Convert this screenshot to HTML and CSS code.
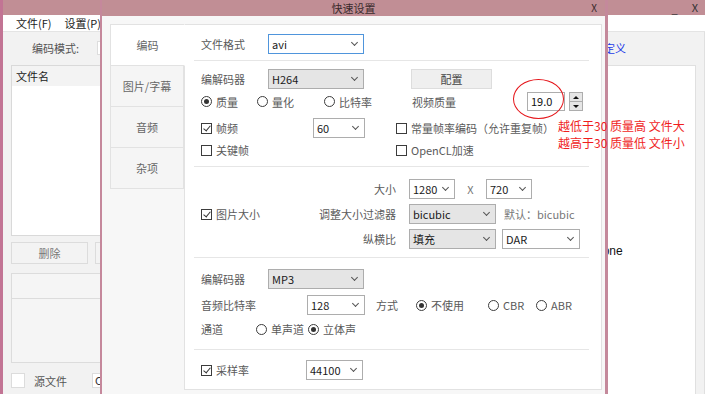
FILE: index.html
```html
<!DOCTYPE html>
<html lang="zh-CN">

<head>
  <meta charset="utf-8">
  <title>快速设置</title>
  <link rel="stylesheet" href="styles.css">
</head>

<body>
  <!-- main window behind the dialog -->
  <div class="app">
    <div class="app-title">
      <span class="win-btn min">_</span>
      <span class="win-btn">X</span>
    </div>
    <div class="app-menu">
      <span>文件(F)</span>
      <span>设置(P)</span>
    </div>
    <div class="app-body">
      <div class="left-pane">
        <div class="mode-row">
          <span class="mode-label">编码模式:</span>
          <span class="mode-box"></span>
        </div>
        <div class="file-list">
          <div class="list-head">文件名</div>
        </div>
        <div class="btn-row">
          <span class="flat-btn">删除</span>
          <span class="flat-btn wide"></span>
        </div>
        <div class="log-box">
          <div class="log-head"></div>
        </div>
        <div class="src-row">
          <span class="big-check"></span>
          <span class="src-label">源文件</span>
          <span class="src-box">C</span>
        </div>
      </div>
      <div class="right-pane">
        <div class="custom-link">自定义</div>
        <div class="side-panel">
          <div class="side-note">None</div>
        </div>
      </div>
    </div>
  </div>

  <!-- quick settings dialog -->
  <div class="dialog">
    <div class="dlg-title">
      <span class="dlg-caption">快速设置</span>
      <span class="dlg-close">X</span>
    </div>
    <div class="dlg-body">
      <div class="tabs">
        <div class="tab active">编码</div>
        <div class="tab">图片/字幕</div>
        <div class="tab">音频</div>
        <div class="tab">杂项</div>
      </div>

      <div class="panel">
        <div class="sec sec-fmt">
          <div class="row">
            <span class="lbl w67">文件格式</span>
            <span class="sel focus w96">avi</span>
          </div>
        </div>

        <div class="sec sec-video">
          <div class="row">
            <span class="lbl w67">编解码器</span>
            <span class="sel gray w96">H264</span>
            <span class="btn">配置</span>
          </div>
          <div class="row row-quality">
            <span class="opt w56"><i class="rb on"></i>质量</span>
            <span class="opt w67"><i class="rb"></i>量化</span>
            <span class="opt w88"><i class="rb"></i>比特率</span>
            <span class="lbl w115">视频质量</span>
            <span class="spin">
              <span class="spin-input">19.0</span>
              <span class="mark"></span>
            </span>
            <span class="spin-btns">
              <span class="up"></span>
              <span class="down"></span>
            </span>
          </div>
          <div class="row row-fps">
            <span class="opt w112"><i class="cb on"></i>帧频</span>
            <span class="sel w52">60</span>
            <span class="opt gap31"><i class="cb"></i>常量帧率编码（允许重复帧）</span>
          </div>
          <div class="row row-key">
            <span class="opt w195"><i class="cb"></i>关键帧</span>
            <span class="opt"><i class="cb"></i>OpenCL加速</span>
          </div>
        </div>

        <div class="sec sec-size">
          <div class="size-check">
            <span class="opt"><i class="cb on"></i>图片大小</span>
          </div>
          <div class="size-grid">
            <span class="glbl">大小</span>
            <span class="gctl">
              <span class="sel w46">1280</span>
              <span class="times">X</span>
              <span class="sel w46">720</span>
            </span>
            <span class="glbl">调整大小过滤器</span>
            <span class="gctl">
              <span class="sel gray w87">bicubic</span>
              <span class="hint">默认：bicubic</span>
            </span>
            <span class="glbl">纵横比</span>
            <span class="gctl">
              <span class="sel gray w87">填充</span>
              <span class="sel w78 ml6">DAR</span>
            </span>
          </div>
        </div>

        <div class="sec sec-audio">
          <div class="row">
            <span class="lbl w67">编解码器</span>
            <span class="sel gray w96">MP3</span>
          </div>
          <div class="row row-bitrate">
            <span class="lbl w106">音频比特率</span>
            <span class="sel w58">128</span>
            <span class="lbl w51 pl11">方式</span>
            <span class="opt w72"><i class="rb on"></i>不使用</span>
            <span class="opt w48"><i class="rb"></i>CBR</span>
            <span class="opt"><i class="rb"></i>ABR</span>
          </div>
          <div class="row row-channel">
            <span class="lbl w55">通道</span>
            <span class="opt w52"><i class="rb"></i>单声道</span>
            <span class="opt"><i class="rb on"></i>立体声</span>
          </div>
        </div>

        <div class="sec sec-rate">
          <div class="row">
            <span class="opt w105"><i class="cb on"></i>采样率</span>
            <span class="sel w57">44100</span>
          </div>
        </div>
      </div>
    </div>
  </div>

  <!-- red annotation drawn over the screenshot -->
  <div class="note">
    <div>越低于30 质量高 文件大</div>
    <div>越高于30 质量低 文件小</div>
  </div>
</body>

</html>
```

FILE: styles.css
```css
* {
  margin: 0;
  padding: 0;
  box-sizing: border-box;
}

body {
  width: 705px;
  height: 394px;
  overflow: hidden;
  position: relative;
  font-family: "Noto Sans CJK SC", "Noto Sans", sans-serif;
  font-size: 11px;
  color: #5a5a5a;
  background: #f2f2f2;
}

/* ---------- main window ---------- */

.app {
  height: 394px;
  display: flex;
  flex-direction: column;
  border-left: 3px solid #c27494;
  background: #f2f2f2;
}

.app-title {
  height: 15px;
  background: #c18e95;
  display: flex;
  justify-content: flex-end;
  align-items: center;
  padding-right: 7px;
  gap: 14px;
  color: #333;
  font-size: 11px;
  line-height: 15px;
}

.win-btn.min {
  margin-top: 2px;
}

.app-menu {
  height: 21px;
  background: #fff;
  display: flex;
  align-items: center;
  gap: 13px;
  padding-left: 13px;
  color: #222;
  border-bottom: 1px solid #e4e4e4;
}

.app-body {
  flex: 1;
  display: flex;
  justify-content: space-between;
}

.left-pane {
  width: 420px;
  padding-left: 8px;
}

.mode-row {
  margin-top: 5px;
  height: 22px;
  display: flex;
  align-items: center;
}

.mode-label {
  width: 86px;
  padding-left: 21px;
  color: #555;
}

.mode-box {
  width: 300px;
  height: 14px;
  background: #fff;
  border: 1px solid #ddd;
}

.file-list {
  margin-top: 6px;
  height: 171px;
  background: #fff;
  border: 1px solid #d9d9d9;
}

.list-head {
  height: 20px;
  line-height: 20px;
  padding-left: 4px;
  background: #f3f3f3;
  color: #222;
}

.btn-row {
  margin-top: 6px;
  height: 22px;
  display: flex;
  gap: 7px;
}

.flat-btn {
  width: 77px;
  display: flex;
  align-items: center;
  justify-content: center;
  background: #f3f3f3;
  border: 1px solid #dcdcdc;
  color: #777;
}

.flat-btn.wide {
  width: 120px;
}

.log-box {
  margin-top: 9px;
  height: 90px;
  border: 1px solid #dcdcdc;
  background: #f5f5f5;
}

.log-head {
  height: 25px;
  border-bottom: 1px solid #dcdcdc;
}

.src-row {
  margin-top: 10px;
  height: 15px;
  display: flex;
  align-items: center;
}

.big-check {
  width: 14px;
  height: 15px;
  background: #fff;
  border: 1px solid #dcdcdc;
}

.src-label {
  margin-left: 9px;
  color: #555;
}

.src-box {
  margin-left: 25px;
  width: 120px;
  height: 15px;
  padding-left: 2px;
  line-height: 13px;
  background: #fff;
  border: 1px solid #dcdcdc;
  color: #333;
}

.right-pane {
  width: 115px;
  padding-right: 8px;
  padding-top: 5px;
  display: flex;
  flex-direction: column;
  border-right: 1px solid #e0e0e0;
}

.custom-link {
  height: 22px;
  line-height: 22px;
  padding-left: 3px;
  color: #1f3ce8;
}

.side-panel {
  margin-top: 6px;
  height: 340px;
  background: #fff;
  border: 1px solid #e0e0e0;
}

.side-note {
  margin-top: 178px;
  padding-left: 3px;
  color: #111;
  font-family: "Liberation Sans", sans-serif;
  font-size: 12px;
}

/* ---------- dialog ---------- */

.dialog {
  position: absolute;
  left: 100px;
  top: 0;
  width: 508px;
  height: 400px;
  border-left: 2px solid #c5889c;
  border-right: 3px solid #c4899b;
  background: #f7f7f7;
}

.dlg-title {
  height: 16px;
  background: #c18e95;
  display: grid;
  grid-template-columns: 40px 1fr 40px;
  align-items: center;
  color: #3a2a2c;
}

.dlg-caption {
  grid-column: 2;
  text-align: center;
  line-height: 16px;
}

.dlg-close {
  text-align: right;
  padding-right: 8px;
  font-size: 10px;
  line-height: 16px;
}

.dlg-body {
  display: flex;
  padding: 8px 3px 0 8px;
}

.tabs {
  width: 74px;
  display: flex;
  flex-direction: column;
}

.tab {
  height: 42px;
  margin-top: -1px;
  display: flex;
  align-items: center;
  justify-content: center;
  background: #f5f5f5;
  border: 1px solid #e2e2e2;
  color: #666;
}

.tab:first-child {
  margin-top: 0;
}

.tab.active {
  background: #fff;
  border-right-color: #fff;
  margin-right: -1px;
  position: relative;
  z-index: 1;
}

.panel {
  width: 418px;
  height: 366px;
  background: #fff;
  border: 1px solid #e2e2e2;
}

.sec {
  margin: 0 12px 0 9px;
  padding-left: 7px;
  border-bottom: 1px solid #e6e6e6;
}

.sec-fmt {
  padding-top: 9px;
  padding-bottom: 6px;
}

.sec-video {
  padding-top: 8px;
  padding-bottom: 6px;
}

.sec-size {
  padding-top: 12px;
  padding-bottom: 8px;
  display: flex;
}

.sec-audio {
  padding-top: 11px;
  padding-bottom: 10px;
}

.sec-rate {
  padding-top: 10px;
  border-bottom: none;
}

.row {
  height: 20px;
  display: flex;
  align-items: center;
}

.row-quality {
  margin-top: 3px;
  height: 19px;
}

.row-fps {
  margin-top: 7px;
}

.row-key {
  margin-top: 2px;
}

.row-bitrate {
  margin-top: 6px;
}

.row-channel {
  margin-top: 4px;
}

.lbl {
  flex: none;
  color: #5a5a5a;
}

.opt {
  flex: none;
  display: flex;
  align-items: center;
  gap: 4px;
  color: #5a5a5a;
}

.w46 { width: 46px; }
.w48 { width: 48px; }
.w51 { width: 51px; }
.w52 { width: 52px; }
.w55 { width: 55px; }
.w56 { width: 56px; }
.w57 { width: 57px; }
.w58 { width: 58px; }
.w67 { width: 67px; }
.w72 { width: 72px; }
.w78 { width: 78px; }
.w87 { width: 87px; }
.w88 { width: 88px; }
.w96 { width: 96px; }
.w105 { width: 105px; }
.w106 { width: 106px; }
.w112 { width: 112px; }
.w115 { width: 115px; }
.w195 { width: 195px; }
.pl11 { padding-left: 11px; }
.ml6 { margin-left: 6px; }
.gap31 { margin-left: 31px; }

/* check box and radio */
.cb,
.rb {
  flex: none;
  width: 11px;
  height: 11px;
  border: 1px solid #3c3c3c;
  background: #fff;
  display: flex;
  align-items: center;
  justify-content: center;
}

.rb {
  border-radius: 50%;
}

.rb.on::after {
  content: "";
  width: 5px;
  height: 5px;
  border-radius: 50%;
  background: #333;
}

.cb.on::after {
  content: "";
  width: 3px;
  height: 6px;
  margin-top: -2px;
  border-right: 1px solid #333;
  border-bottom: 1px solid #333;
  transform: rotate(40deg);
}

/* drop-down box */
.sel {
  flex: none;
  height: 20px;
  display: flex;
  align-items: center;
  justify-content: space-between;
  padding: 0 6px 0 3px;
  background: #fff;
  border: 1px solid #adadad;
  color: #1a1a1a;
}

.sel::after {
  content: "";
  width: 4px;
  height: 4px;
  margin-top: -3px;
  border-right: 1px solid #555;
  border-bottom: 1px solid #555;
  transform: rotate(45deg);
}

.sel.gray {
  background: #e5e5e5;
}

.sel.focus {
  border-color: #4f95dc;
}

.btn {
  flex: none;
  margin-left: 47px;
  width: 81px;
  height: 20px;
  display: flex;
  align-items: center;
  justify-content: center;
  background: #efefef;
  border: 1px solid #dddddd;
  color: #444;
}

/* spin box with red ring */
.spin {
  position: relative;
  flex: none;
}

.spin-input {
  display: block;
  width: 38px;
  height: 19px;
  line-height: 17px;
  padding-left: 3px;
  border: 1px solid #adadad;
  color: #111;
}

.mark {
  position: absolute;
  left: -14px;
  top: -13px;
  width: 51px;
  height: 40px;
  border: 1.5px solid #e5161b;
  border-radius: 50%;
}

.spin-btns {
  flex: none;
  margin-left: 4px;
  width: 14px;
  height: 19px;
  display: flex;
  flex-direction: column;
  border: 1px solid #adadad;
  background: #e6e6e6;
}

.spin-btns span {
  flex: 1;
  display: flex;
  align-items: center;
  justify-content: center;
}

.spin-btns .up {
  border-bottom: 1px solid #adadad;
}

.spin-btns .up::after {
  content: "";
  border-left: 3px solid transparent;
  border-right: 3px solid transparent;
  border-bottom: 3px solid #111;
}

.spin-btns .down::after {
  content: "";
  border-left: 3px solid transparent;
  border-right: 3px solid transparent;
  border-top: 3px solid #111;
}

/* picture size block */
.size-check {
  width: 101px;
  display: flex;
  align-items: center;
}

.size-grid {
  display: grid;
  grid-template-columns: 94px auto;
  grid-auto-rows: 20px;
  column-gap: 13px;
  row-gap: 5px;
  align-items: center;
}

.glbl {
  text-align: right;
  color: #5a5a5a;
}

.gctl {
  display: flex;
  align-items: center;
}

.times {
  width: 31px;
  text-align: center;
  color: #777;
}

.hint {
  margin-left: 8px;
  color: #777;
}

/* annotation */
.note {
  position: absolute;
  left: 558px;
  top: 117px;
  color: #f01e1e;
  font-size: 12px;
  line-height: 17px;
  white-space: nowrap;
}
```
